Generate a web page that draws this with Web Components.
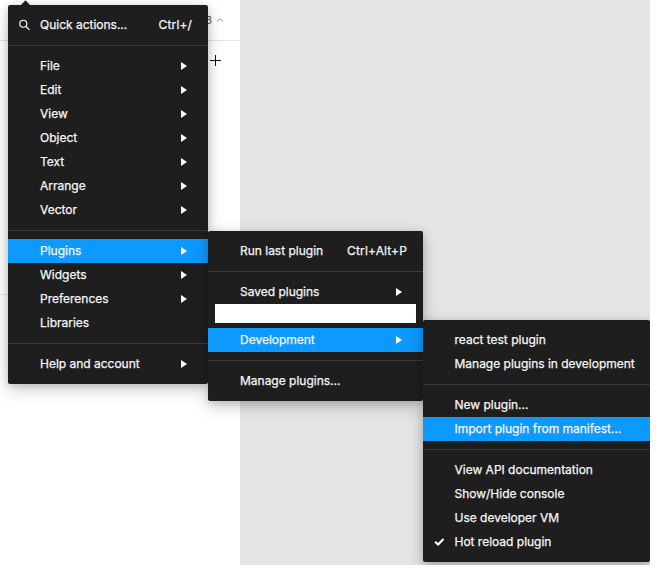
<!DOCTYPE html>
<html lang="en">
<head>
<meta charset="utf-8">
<title>Plugin menus</title>
<style>
html, body { margin: 0; height: 100%; background: #fff; overflow: hidden; }
body { font-family: Inter, "Liberation Sans", sans-serif; }
</style>
</head>
<body>
<editor-window>
  <side-panel slot="panel"></side-panel>
  <fly-menu style="--x:8px;--y:5px;--w:200px" pointer>
    <menu-row icon="search" hint="Ctrl+/">Quick actions...</menu-row>
    <menu-rule></menu-rule>
    <menu-row sub>File</menu-row>
    <menu-row sub>Edit</menu-row>
    <menu-row sub>View</menu-row>
    <menu-row sub>Object</menu-row>
    <menu-row sub>Text</menu-row>
    <menu-row sub>Arrange</menu-row>
    <menu-row sub>Vector</menu-row>
    <menu-rule></menu-rule>
    <menu-row sub active>Plugins</menu-row>
    <menu-row sub>Widgets</menu-row>
    <menu-row sub>Preferences</menu-row>
    <menu-row>Libraries</menu-row>
    <menu-rule></menu-rule>
    <menu-row sub>Help and account</menu-row>
  </fly-menu>
  <fly-menu style="--x:208px;--y:231px;--w:215px">
    <menu-row hint="Ctrl+Alt+P">Run last plugin</menu-row>
    <menu-rule></menu-rule>
    <menu-row sub>Saved plugins</menu-row>
    <menu-blank></menu-blank>
    <menu-row sub active>Development</menu-row>
    <menu-rule></menu-rule>
    <menu-row>Manage plugins...</menu-row>
  </fly-menu>
  <fly-menu style="--x:423px;--y:320px;--w:227px;--indent:31.5px">
    <menu-row>react test plugin</menu-row>
    <menu-row>Manage plugins in development</menu-row>
    <menu-rule></menu-rule>
    <menu-row>New plugin...</menu-row>
    <menu-row active>Import plugin from manifest...</menu-row>
    <menu-rule></menu-rule>
    <menu-row>View API documentation</menu-row>
    <menu-row>Show/Hide console</menu-row>
    <menu-row>Use developer VM</menu-row>
    <menu-row icon="check">Hot reload plugin</menu-row>
  </fly-menu>
</editor-window>
<script>
class Base extends HTMLElement {
  connectedCallback() {
    if (!this.shadowRoot) this.attachShadow({ mode: 'open' }).innerHTML = this.view();
  }
}

class EditorWindow extends Base {
  view() {
    return `<style>
      :host { display: grid; grid-template-columns: 240px 1fr; position: relative; width: 650px; height: 565px; overflow: hidden; }
      .canvas { background: #e5e5e5; }
    </style><slot name="panel"></slot><div class="canvas"></div><slot></slot>`;
  }
}

class SidePanel extends Base {
  view() {
    return `<style>
      :host { display: flex; flex-direction: column; background: #fff; }
      header, .pages { display: flex; align-items: center; justify-content: flex-end; box-sizing: border-box; border-bottom: 1px solid #e5e5e5; }
      header { height: 41px; padding-right: 16px; font-size: 11px; color: #555; gap: 4px; }
      .pages { height: 254px; align-items: flex-start; padding: 13px 18px 0 0; }
      svg { display: block; }
    </style>
    <header><span>3</span><svg width="8" height="6" viewBox="0 0 8 6" fill="none" stroke="#888"><path d="M1 4.5 4 1.5l3 3"/></svg></header>
    <div class="pages"><svg width="13" height="13" viewBox="0 0 13 13" stroke="#111" fill="none"><path d="M1 6.5h11M6.5 1v11"/></svg></div>`;
  }
}

class FlyMenu extends Base {
  view() {
    return `<style>
      :host { position: absolute; left: var(--x); top: var(--y); width: var(--w); box-sizing: border-box; padding: 8px 0;
        display: flex; flex-direction: column; background: #1e1e1e; border-radius: 2px;
        box-shadow: 0 5px 17px rgba(0,0,0,.2), 0 2px 7px rgba(0,0,0,.15); }
      .tip { position: absolute; left: 12px; top: -5px; }
    </style>${this.hasAttribute('pointer') ? '<svg class="tip" width="11" height="6" viewBox="0 0 11 6"><path d="M0 6 5.5 .3 11 6z" fill="#1e1e1e"/></svg>' : ''}<slot></slot>`;
  }
}

const icons = {
  search: '<svg width="12" height="12" viewBox="0 0 12 12" fill="none" stroke="#fff" stroke-width="1.15"><circle cx="4.3" cy="4.7" r="3.5"/><path d="M6.9 7.3 10.4 10.9"/></svg>',
  check: '<svg width="12" height="12" viewBox="0 0 12 12" fill="none" stroke="#fff" stroke-width="2.1"><path d="M1.1 5.7 4.1 8.5 9.5 3.1"/></svg>'
};

class MenuRow extends Base {
  view() {
    const hint = this.getAttribute('hint');
    return `<style>
      :host { display: grid; grid-template-columns: var(--indent, 32px) 1fr auto; align-items: center; height: 24px;
        color: #f6f6f6; font-size: 12px; line-height: 24px; letter-spacing: -.01px; white-space: nowrap; font-weight: 400;
        -webkit-text-stroke: .25px #f6f6f6; }
      :host([active]) { background: #0d99ff; }
      .icon { display: flex; padding-left: 10.5px; }
      .hint { padding-right: 16px; letter-spacing: .14px; }
      .arrow { display: block; margin-right: 21px; }
    </style>
    <span class="icon">${icons[this.getAttribute('icon')] || ''}</span><span><slot></slot></span>
    ${hint ? `<span class="hint">${hint}</span>` : ''}
    ${this.hasAttribute('sub') ? '<svg class="arrow" width="6" height="8" viewBox="0 0 6 8"><path d="M0 0 6 4 0 8z" fill="#fff"/></svg>' : ''}`;
  }
}

class MenuRule extends Base {
  view() { return '<style>:host { display: block; height: 1px; margin: 8px 0; background: #393939; }</style>'; }
}

class MenuBlank extends Base {
  view() { return '<style>:host { display: block; height: 19px; margin: 0 7px 5px; background: #fff; }</style>'; }
}

customElements.define('editor-window', EditorWindow);
customElements.define('side-panel', SidePanel);
customElements.define('fly-menu', FlyMenu);
customElements.define('menu-row', MenuRow);
customElements.define('menu-rule', MenuRule);
customElements.define('menu-blank', MenuBlank);
</script>
</body>
</html>
